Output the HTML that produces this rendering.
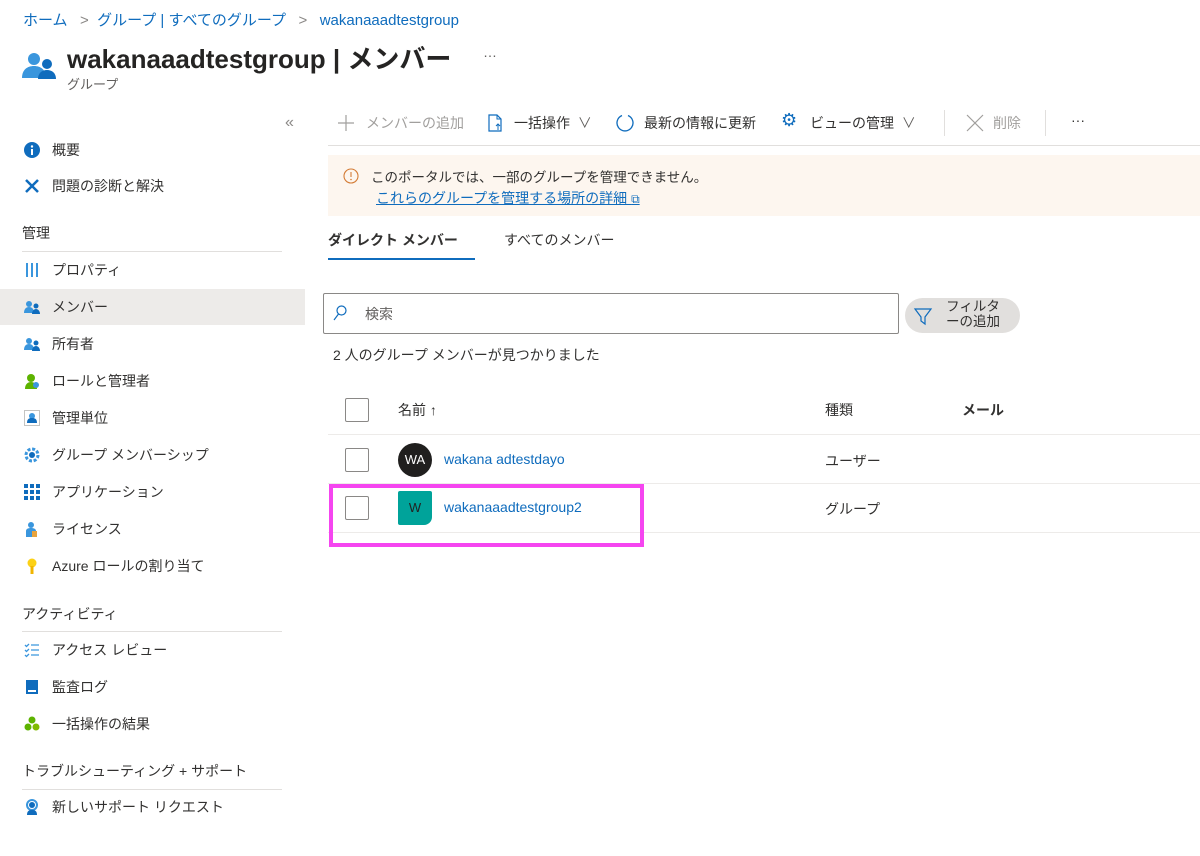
<!DOCTYPE html>
<html><head><meta charset="utf-8"><style>
*{box-sizing:border-box;margin:0;padding:0}
body{width:1200px;height:856px;background:#fff;font-family:"Liberation Sans","Noto Sans CJK JP",sans-serif;color:#323130;position:relative;overflow:hidden;font-size:14px}
.a{position:absolute;white-space:nowrap}
.lk{color:#0f6cbd}
.nav{position:absolute;left:52px;font-size:14px;line-height:18px}
.ic{position:absolute;left:24px;width:16px;height:16px}
.h{position:absolute;left:22px;font-size:14px;color:#323130}
.ln{position:absolute;left:22px;width:260px;height:1px;background:#e1dfdd}
.cb{position:absolute;left:345px;width:24px;height:24px;border:1px solid #8a8886;border-radius:2px;background:#fff}
.tb{position:absolute;top:114px;font-size:14px;line-height:18px;color:#323130}
</style></head><body>
<div class="a lk" style="left:23px;top:9px;font-size:15px">ホーム <span style="color:#8a8886">&nbsp;&nbsp;&gt;&nbsp;&nbsp;</span>グループ | すべてのグループ<span style="color:#8a8886">&nbsp;&nbsp;&nbsp;&gt;&nbsp;&nbsp;&nbsp;</span>wakanaaadtestgroup</div>
<svg class="a" style="left:22px;top:52px" width="34" height="28" viewBox="0 0 34 28"><circle cx="12" cy="7" r="6" fill="#3a96dd"/><path d="M0 26c0-8 5-12 12-12s12 4 12 12z" fill="#3a96dd"/><circle cx="25" cy="12" r="5" fill="#0f6cbd"/><path d="M16 27c0-6 4-9 9-9s9 3 9 9z" fill="#0f6cbd"/></svg>
<div class="a" style="left:67px;top:39px;font-size:26px;font-weight:bold;color:#252423">wakanaaadtestgroup | メンバー</div>
<div class="a" style="left:483px;top:44px;font-size:14px;color:#605e5c">…</div>
<div class="a" style="left:67px;top:74px;font-size:13px;color:#605e5c">グループ</div>
<div class="a" style="left:285px;top:114px;color:#8a8886;font-size:16px">«</div>

<svg class="ic" style="top:142px" viewBox="0 0 16 16"><circle cx="8" cy="8" r="8" fill="#0f6cbd"/><rect x="7" y="7" width="2" height="6" fill="#fff"/><circle cx="8" cy="4.5" r="1.2" fill="#fff"/></svg>
<div class="nav" style="top:141px">概要</div>
<svg class="ic" style="top:178px" viewBox="0 0 16 16"><path d="M2 2l12 12M14 2L2 14" stroke="#0f6cbd" stroke-width="2.5"/></svg>
<div class="nav" style="top:177px">問題の診断と解決</div>
<div class="h" style="top:223px">管理</div><div class="ln" style="top:251px"></div>
<svg class="ic" style="top:262px" viewBox="0 0 16 16"><path d="M3 1v14M8 1v14M13 1v14" stroke="#3a96dd" stroke-width="2"/></svg>
<div class="nav" style="top:261px">プロパティ</div>
<div class="a" style="left:0;top:289px;width:305px;height:36px;background:#edebe9"></div>
<svg class="ic" style="top:299px" viewBox="0 0 16 16"><circle cx="5" cy="5" r="3" fill="#3a96dd"/><path d="M0 14c0-4 2-6 5-6s5 2 5 6z" fill="#3a96dd"/><circle cx="12" cy="7" r="2.5" fill="#0f6cbd"/><path d="M8 15c0-3 2-5 4-5s4 2 4 5z" fill="#0f6cbd"/></svg>
<div class="nav" style="top:298px">メンバー</div>
<svg class="ic" style="top:336px" viewBox="0 0 16 16"><circle cx="5" cy="5" r="3" fill="#3a96dd"/><path d="M0 14c0-4 2-6 5-6s5 2 5 6z" fill="#3a96dd"/><circle cx="12" cy="7" r="2.5" fill="#0f6cbd"/><path d="M8 15c0-3 2-5 4-5s4 2 4 5z" fill="#0f6cbd"/></svg>
<div class="nav" style="top:335px">所有者</div>
<svg class="ic" style="top:373px" viewBox="0 0 16 16"><circle cx="7" cy="5" r="4" fill="#5db300"/><path d="M1 16c0-5 3-7 6-7s6 2 6 7z" fill="#5db300"/><circle cx="12" cy="12" r="3" fill="#3a96dd"/></svg>
<div class="nav" style="top:372px">ロールと管理者</div>
<svg class="ic" style="top:410px" viewBox="0 0 16 16"><rect x=".5" y=".5" width="15" height="15" fill="none" stroke="#8a8886" stroke-dasharray="1 1"/><circle cx="8" cy="6" r="3" fill="#3a96dd"/><path d="M3 13c0-4 2-5 5-5s5 1 5 5z" fill="#0f6cbd"/></svg>
<div class="nav" style="top:409px">管理単位</div>
<svg class="ic" style="top:447px" viewBox="0 0 16 16"><circle cx="8" cy="8" r="6" fill="none" stroke="#3a96dd" stroke-width="3" stroke-dasharray="3 1.7"/><circle cx="8" cy="8" r="3" fill="#0f6cbd"/></svg>
<div class="nav" style="top:446px">グループ メンバーシップ</div>
<svg class="ic" style="top:484px" viewBox="0 0 16 16"><g fill="#0f6cbd"><rect x="0" y="0" width="4" height="4"/><rect x="6" y="0" width="4" height="4"/><rect x="12" y="0" width="4" height="4"/><rect x="0" y="6" width="4" height="4"/><rect x="6" y="6" width="4" height="4"/><rect x="12" y="6" width="4" height="4"/><rect x="0" y="12" width="4" height="4"/><rect x="6" y="12" width="4" height="4"/><rect x="12" y="12" width="4" height="4"/></g></svg>
<div class="nav" style="top:483px">アプリケーション</div>
<svg class="ic" style="top:521px" viewBox="0 0 16 16"><circle cx="7" cy="4" r="3" fill="#3a96dd"/><path d="M2 16v-6c0-2 2-3 5-3s5 1 5 3v6z" fill="#3a96dd"/><rect x="8" y="10" width="5" height="6" fill="#e8a33d"/></svg>
<div class="nav" style="top:520px">ライセンス</div>
<svg class="ic" style="top:558px" viewBox="0 0 16 16"><circle cx="8" cy="5" r="4.5" fill="#fcd116"/><rect x="6.5" y="8" width="3" height="8" fill="#f0b400"/></svg>
<div class="nav" style="top:557px">Azure ロールの割り当て</div>
<div class="h" style="top:604px">アクティビティ</div><div class="ln" style="top:631px"></div>
<svg class="ic" style="top:642px" viewBox="0 0 16 16"><path d="M1 3l1.5 1.5L5 2M1 8l1.5 1.5L5 7M1 13l1.5 1.5L5 12M7 3h8M7 8h8M7 13h8" stroke="#3a96dd" stroke-width="1.3" fill="none"/></svg>
<div class="nav" style="top:641px">アクセス レビュー</div>
<svg class="ic" style="top:679px" viewBox="0 0 16 16"><rect x="2" y="1" width="12" height="14" fill="#0f6cbd"/><rect x="4" y="11" width="8" height="2" fill="#fff"/></svg>
<div class="nav" style="top:678px">監査ログ</div>
<svg class="ic" style="top:716px" viewBox="0 0 16 16"><circle cx="8" cy="4" r="3.5" fill="#5db300"/><circle cx="4" cy="11" r="3.5" fill="#5db300"/><circle cx="12" cy="11" r="3.5" fill="#7fba00"/></svg>
<div class="nav" style="top:715px">一括操作の結果</div>
<div class="h" style="top:761px">トラブルシューティング + サポート</div><div class="ln" style="top:789px"></div>
<svg class="ic" style="top:799px" viewBox="0 0 16 16"><circle cx="8" cy="6" r="5" fill="none" stroke="#3a96dd" stroke-width="2"/><circle cx="8" cy="6" r="3" fill="#0f6cbd"/><path d="M3 16c0-4 2-5 5-5s5 1 5 5z" fill="#0f6cbd"/></svg>
<div class="nav" style="top:798px">新しいサポート リクエスト</div>

<!-- toolbar -->
<svg class="a" style="left:337px;top:114px" width="18" height="18" viewBox="0 0 18 18"><path d="M9 1v16M1 9h16" stroke="#a19f9d" stroke-width="1.2"/></svg>
<div class="tb" style="left:366px;color:#a19f9d">メンバーの追加</div>
<svg class="a" style="left:488px;top:114px" width="16" height="18" viewBox="0 0 16 18"><path d="M1 1h8l4 4v12H1z" fill="none" stroke="#0f6cbd" stroke-width="1.2"/><path d="M9 1v4h4" fill="none" stroke="#0f6cbd"/><path d="M10 16v-6M8 12l2-2 2 2" stroke="#0f6cbd" fill="none"/></svg>
<div class="tb" style="left:514px">一括操作 <span style="color:#605e5c">&nbsp;∨</span></div>
<svg class="a" style="left:615px;top:113px" width="20" height="20" viewBox="0 0 20 20"><path d="M7 2.5A8 8 0 1 0 13 2.5" fill="none" stroke="#0f6cbd" stroke-width="1.3"/></svg>
<div class="tb" style="left:644px">最新の情報に更新</div>
<div class="tb" style="left:781px;color:#0f6cbd;font-size:18px;top:111px">⚙</div>
<div class="tb" style="left:810px">ビューの管理 <span style="color:#605e5c">&nbsp;∨</span></div>
<div class="a" style="left:944px;top:110px;width:1px;height:26px;background:#e1dfdd"></div>
<svg class="a" style="left:965px;top:113px" width="20" height="20" viewBox="0 0 20 20"><path d="M2 2l16 16M18 2L2 18" stroke="#a19f9d" stroke-width="1.2"/></svg>
<div class="tb" style="left:993px;color:#a19f9d">削除</div>
<div class="a" style="left:1045px;top:110px;width:1px;height:26px;background:#e1dfdd"></div>
<div class="tb" style="left:1071px;top:111px">···</div>
<div class="a" style="left:328px;top:145px;width:872px;height:1px;background:#e1dfdd"></div>

<div class="a" style="left:328px;top:155px;width:872px;height:61px;background:#fdf6ef"></div>
<svg class="a" style="left:343px;top:168px" width="16" height="16" viewBox="0 0 16 16"><circle cx="8" cy="8" r="7" fill="none" stroke="#d47c36" stroke-width="1.1"/><path d="M8 4v5" stroke="#d47c36" stroke-width="1.1"/><circle cx="8" cy="11.5" r=".8" fill="#d47c36"/></svg>
<div class="a" style="left:371px;top:166px;font-size:13.5px">このポータルでは、一部のグループを管理できません。</div>
<div class="a lk" style="left:376px;top:188px;font-size:14px;text-decoration:underline">これらのグループを管理する場所の詳細 <span style="font-size:12px">⧉</span></div>

<div class="a" style="left:328px;top:230px;font-size:14px;font-weight:bold">ダイレクト メンバー</div>
<div class="a" style="left:504px;top:230px;font-size:14px">すべてのメンバー</div>
<div class="a" style="left:328px;top:258px;width:147px;height:2px;background:#0f6cbd"></div>

<div class="a" style="left:323px;top:293px;width:576px;height:41px;border:1px solid #8a8886;border-radius:2px"></div>
<svg class="a" style="left:333px;top:305px" width="14" height="16" viewBox="0 0 14 16"><circle cx="8.5" cy="5.5" r="4.5" fill="none" stroke="#0f6cbd" stroke-width="1.2"/><path d="M5.5 9L1 15" stroke="#0f6cbd" stroke-width="1.2"/></svg>
<div class="a" style="left:365px;top:304px;font-size:14px;color:#605e5c">検索</div>
<div class="a" style="left:905px;top:298px;width:115px;height:35px;border-radius:18px;background:#e1dfdd"></div>
<svg class="a" style="left:913px;top:306px" width="20" height="20" viewBox="0 0 20 20"><path d="M2 3h16l-6 8v7l-4-3v-4z" fill="none" stroke="#0f6cbd" stroke-width="1.2"/></svg>
<div class="a" style="left:946px;top:299px;font-size:13.5px;line-height:15px;color:#323130;text-align:center">フィルタ<br>ーの追加</div>

<div class="a" style="left:333px;top:345px;font-size:14px">2 人のグループ メンバーが見つかりました</div>

<div class="cb" style="top:398px"></div>
<div class="a" style="left:398px;top:400px;font-size:14px">名前 ↑</div>
<div class="a" style="left:825px;top:400px;font-size:14px">種類</div>
<div class="a" style="left:962px;top:400px;font-size:14px;font-weight:bold">メール</div>
<div class="a" style="left:328px;top:434px;width:872px;height:1px;background:#edebe9"></div>
<div class="cb" style="top:448px"></div>
<div class="a" style="left:398px;top:443px;width:34px;height:34px;border-radius:50%;background:#201f1e;color:#fff;font-size:13px;text-align:center;line-height:34px">WA</div>
<div class="a lk" style="left:444px;top:451px;font-size:14px">wakana adtestdayo</div>
<div class="a" style="left:825px;top:451px;font-size:14px">ユーザー</div>
<div class="a" style="left:328px;top:483px;width:872px;height:1px;background:#edebe9"></div>
<div class="cb" style="top:496px"></div>
<div class="a" style="left:398px;top:491px;width:34px;height:34px;border-radius:2px 2px 8px 2px;background:#00a39a;color:#222;font-size:13px;text-align:center;line-height:34px">W</div>
<div class="a lk" style="left:444px;top:499px;font-size:14px">wakanaaadtestgroup2</div>
<div class="a" style="left:825px;top:499px;font-size:14px">グループ</div>
<div class="a" style="left:328px;top:532px;width:872px;height:1px;background:#edebe9"></div>
<div class="a" style="left:329px;top:484px;width:315px;height:63px;border:4px solid #f545f0"></div>
</body></html>
